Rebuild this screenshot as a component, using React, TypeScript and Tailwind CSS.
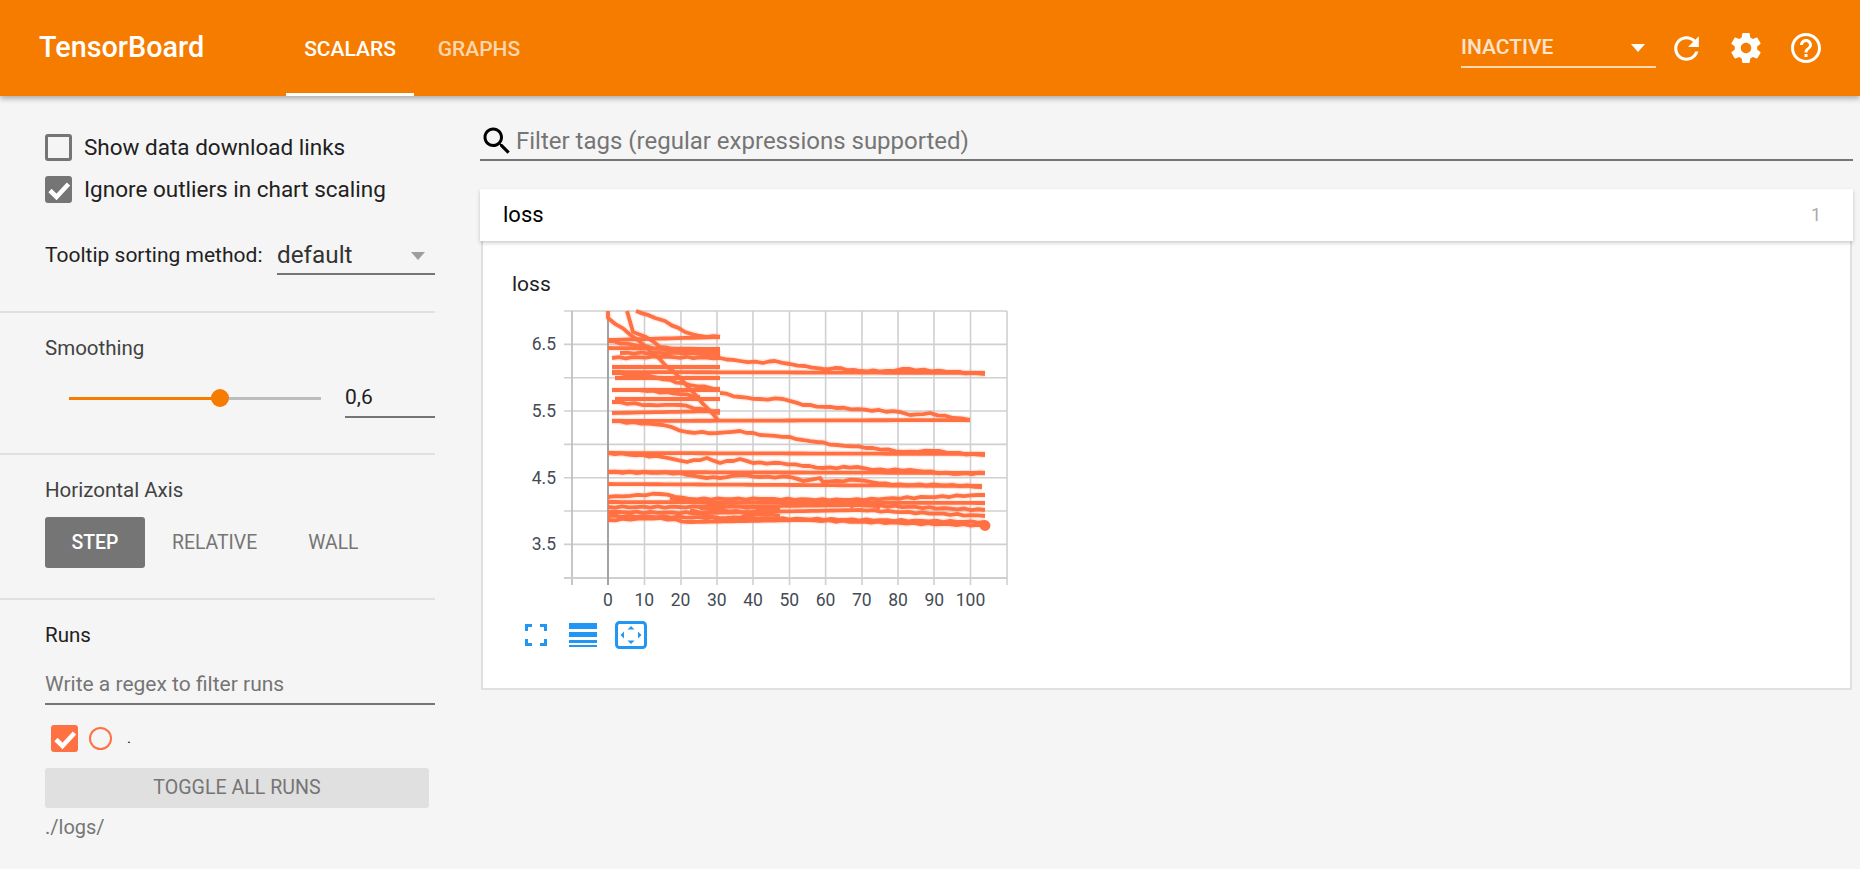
import React from "react";

const RUN = "#ff7043";

// coarse traces read off the chart, in page pixels
const traces: number[][][] = [
	[[608, 311], [608, 318], [638, 340], [680, 378], [718, 420]],
	[[627, 311], [633, 332], [646, 337], [660, 347], [690, 352], [720, 350]],
	[[636, 311], [655, 318], [665, 321], [685, 332], [700, 336], [720, 337]],
	[[608, 340], [720, 337]],
	[[608, 348], [720, 349]],
	[[608, 341], [640, 346], [680, 352], [720, 356]],
	[[620, 353], [720, 353]],
	[[612, 358], [660, 357], [720, 358], [740, 361], [763, 363], [775, 361], [790, 364], [805, 366], [823, 369], [835, 368], [860, 371], [893, 371], [902, 369], [953, 372], [985, 374]],
	[[612, 367], [720, 367]],
	[[612, 372], [985, 373]],
	[[612, 373], [650, 376], [690, 385], [720, 389]],
	[[615, 378], [720, 378]],
	[[612, 390], [720, 390]],
	[[640, 390], [680, 394], [700, 397]],
	[[615, 399], [720, 399]],
	[[720, 393], [740, 397], [760, 399], [783, 399], [803, 405], [837, 408], [900, 412], [910, 415], [930, 413], [953, 418], [970, 420]],
	[[612, 402], [650, 405], [680, 405], [720, 413]],
	[[612, 413], [720, 411]],
	[[612, 421], [970, 420]],
	[[612, 421], [663, 425], [687, 432], [717, 433], [740, 431], [760, 435], [790, 437], [803, 440], [817, 442], [837, 445], [873, 448], [903, 452], [933, 451], [953, 453], [985, 455]],
	[[608, 453], [985, 454]],
	[[608, 453], [663, 457], [687, 462], [707, 458], [720, 463], [740, 459], [753, 463], [780, 463], [803, 466], [823, 468], [857, 467], [873, 470], [910, 470], [953, 474], [985, 473]],
	[[608, 472], [985, 473]],
	[[608, 472], [680, 473], [700, 477], [720, 478], [740, 475], [760, 477], [790, 477], [803, 481], [820, 478], [823, 482], [857, 480], [893, 485], [953, 485], [982, 487]],
	[[608, 484], [982, 486]],
	[[608, 497], [660, 494], [690, 499], [760, 499], [850, 500], [985, 495]],
	[[608, 502], [985, 503]],
	[[608, 507], [700, 507], [860, 505], [985, 510]],
	[[608, 512], [700, 513], [860, 510], [985, 516]],
	[[608, 516], [985, 522]],
	[[608, 520], [660, 518], [690, 522], [800, 520], [985, 525.5]],
	[[670, 498], [720, 505], [780, 510]],
	[[690, 510], [720, 520], [760, 514]],
	[[850, 507], [862, 501], [880, 508]],
	[[700, 508], [780, 516]],
];

// adds a small repeatable wobble so long traces don't look ruled
function wobble(trace: number[][], seed: number): string {
	const out: string[] = [];
	for (let i = 0; i < trace.length - 1; i++) {
		const [x0, y0] = trace[i];
		const [x1, y1] = trace[i + 1];
		const steps = Math.max(1, Math.round((x1 - x0) / 7));
		for (let s = 0; s < steps; s++) {
			const t = s / steps;
			const n = s === 0 ? 0 : Math.sin((x0 + t * (x1 - x0)) * 0.37 + seed * 2.1) * 0.7;
			const flat = Math.abs(y1 - y0) < 4 && x1 - x0 > 100;
			out.push(`${x0 + t * (x1 - x0)},${y0 + t * (y1 - y0) + (flat ? 0 : n)}`);
		}
	}
	const last = trace[trace.length - 1];
	out.push(`${last[0]},${last[1]}`);
	return out.join(" ");
}

function ChartPlot() {
	const hLines = [311, 344.4, 377.8, 411, 444.4, 477.7, 511, 544.4, 577.7];
	const vLines = [644.5, 681, 717, 753, 789.5, 825.6, 862, 898, 934, 970.5];
	const xLabels = [0, 10, 20, 30, 40, 50, 60, 70, 80, 90, 100];
	return (
		<svg width="500" height="312" viewBox="520 300 500 312" className="block">
			{hLines.map((y) => (
				<line key={y} x1="564" x2="1007" y1={y} y2={y} stroke="#d0d0d0" strokeWidth="1.6" />
			))}
			{vLines.map((x) => (
				<line key={x} x1={x} x2={x} y1="311" y2="585" stroke="#d0d0d0" strokeWidth="1.6" />
			))}
			<line x1="572" x2="572" y1="311" y2="585" stroke="#c0c0c0" strokeWidth="1.8" />
			<line x1="1007" x2="1007" y1="311" y2="585" stroke="#d0d0d0" strokeWidth="1.6" />
			<line x1="564" x2="1007" y1="578" y2="578" stroke="#cfcfcf" strokeWidth="2" />
			<line x1="608" x2="608" y1="311" y2="585" stroke="#a3a3a3" strokeWidth="2" />
			{traces.map((t, i) => (
				<polyline key={"halo" + i} points={wobble(t, i + 3)} fill="none" stroke={RUN} strokeOpacity="0.14" strokeWidth="6.5" />
			))}
			{traces.map((t, i) => (
				<polyline key={"run" + i} points={wobble(t, i)} fill="none" stroke={RUN} strokeWidth="3.8" strokeLinejoin="round" />
			))}
			<circle cx="985" cy="525.5" r="5.4" fill={RUN} />
			{[["6.5", 344.4], ["5.5", 411], ["4.5", 477.7], ["3.5", 544.4]].map(([label, y]) => (
				<text key={label} x="556" y={Number(y) + 6} textAnchor="end" fontSize="17.5" fill="#444b55">
					{label}
				</text>
			))}
			{xLabels.map((v) => (
				<text key={v} x={608 + v * 3.625} y="606" textAnchor="middle" fontSize="17.5" fill="#444b55">
					{v}
				</text>
			))}
		</svg>
	);
}

function ChartTools() {
	return (
		<div className="flex items-center mt-[9px] ml-[5px]">
			<svg width="22" height="22" viewBox="0 0 22 22" fill="none" stroke="#2196f3" strokeWidth="3">
				<path d="M1.5 7V1.5H7M15 1.5h5.5V7M20.5 15v5.5H15M7 20.5H1.5V15" />
			</svg>
			<svg width="28" height="24" viewBox="0 0 28 24" className="ml-[22px]" fill="#2196f3">
				<rect x="0" y="0" width="28" height="6" />
				<rect x="0" y="9" width="28" height="5" />
				<rect x="0" y="17" width="28" height="3" />
				<rect x="0" y="22" width="28" height="2" />
			</svg>
			<svg width="32" height="28" viewBox="0 0 32 28" className="ml-[18px]">
				<rect x="1.5" y="1.5" width="29" height="25" rx="3" fill="none" stroke="#2196f3" strokeWidth="3" />
				<path d="M16 5l3.5 3.5h-7zM16 23l-3.5-3.5h7zM5.5 14L9 10.5v7zM26.5 14L23 10.5v7z" fill="#2196f3" />
			</svg>
		</div>
	);
}

function Check({ checked, color }: { checked: boolean; color: string }) {
	return (
		<div
			className="w-[27px] h-[27px] shrink-0 rounded-[3px] border-[3px] flex items-center justify-center"
			style={{ borderColor: color, backgroundColor: checked ? color : "transparent" }}
		>
			{checked && (
				<svg width="24" height="24" viewBox="0 0 24 24" fill="none" stroke="white" strokeWidth="4.6" className="shrink-0">
					<path d="M3 12.5l6.5 6.5L21.5 6" />
				</svg>
			)}
		</div>
	);
}

function Sidebar() {
	return (
		<aside className="w-[435px] shrink-0">
			<div className="h-[217px] pt-[38px] pl-[45px] border-b-2 border-[#e0e0e0]">
				<div className="flex items-center h-[27px] text-[22.5px] text-[#212121]">
					<Check checked={false} color="#757575" />
					<span className="ml-[12px]">Show data download links</span>
				</div>
				<div className="flex items-center h-[27px] mt-[15px] text-[22.5px] text-[#212121]">
					<Check checked={true} color="#757575" />
					<span className="ml-[12px]">Ignore outliers in chart scaling</span>
				</div>
				<div className="flex items-start mt-[37px]">
					<span className="text-[21px] text-[#212121] leading-[28px] pt-[1px] w-[232px] whitespace-nowrap">Tooltip sorting method:</span>
					<div className="w-[158px] h-[35px] pt-[1px] border-b-2 border-[#757575] flex justify-between pr-[10px] text-[24.3px] text-[#333] leading-[28px]">
						<span>default</span>
						<span className="w-0 h-0 mt-[11px] border-x-[7px] border-x-transparent border-t-[8px] border-t-[#9e9e9e]" />
					</div>
				</div>
			</div>

			<div className="h-[142px] pl-[45px] border-b-2 border-[#e0e0e0]">
				<div className="pt-[23px] text-[20.5px] leading-[24px] text-[#424242]">Smoothing</div>
				<div className="flex items-start mt-[25px]">
					<div className="relative w-[252px] h-[3px] ml-[24px] mt-[12px] bg-[#bdbdbd]">
						<div className="h-full w-[151px] bg-[#f57c00]" />
						<div className="absolute left-[142px] top-[-8px] w-[18px] h-[18px] rounded-full bg-[#f57c00]" />
					</div>
					<div className="ml-[24px] w-[90px] h-[33px] border-b-2 border-[#757575] text-[21px] leading-[24px] text-[#212121]">0,6</div>
				</div>
			</div>

			<div className="h-[145px] pl-[45px] border-b-2 border-[#e0e0e0]">
				<div className="pt-[23px] text-[20.5px] leading-[24px] text-[#424242]">Horizontal Axis</div>
				<div className="flex items-center mt-[15px] text-[19.4px] text-[#757575]">
					<div className="w-[100px] h-[51px] rounded-[3px] bg-[#757575] text-white flex items-center justify-center font-medium">STEP</div>
					<span className="ml-[27px]">RELATIVE</span>
					<span className="ml-[51px]">WALL</span>
				</div>
			</div>

			<div className="pl-[45px]">
				<div className="pt-[23px] text-[20.5px] leading-[24px] text-[#212121]">Runs</div>
				<div className="mt-[14px] h-[44px] pt-[11px] border-b-[2px] border-[#757575] text-[21px] leading-[24px] text-[#757575]">Write a regex to filter runs</div>
				<div className="flex items-center h-[27px] ml-[6px] mt-[20px]">
					<Check checked={true} color={RUN} />
					<div className="ml-[11px] w-[23px] h-[23px] rounded-full border-2 border-[#ff7043]" />
					<span className="ml-[15px] text-[15px] text-black">.</span>
				</div>
				<div className="mt-[16px] w-[384px] h-[40px] rounded-[3px] bg-[#e0e0e0] flex items-center justify-center text-[19.6px] text-[#757575]">TOGGLE ALL RUNS</div>
				<div className="mt-[7px] text-[20px] leading-[24px] text-[#757575]">./logs/</div>
			</div>
		</aside>
	);
}

export default function App() {
	return (
		<div className="w-[1860px] h-[869px] overflow-hidden bg-[#f5f5f5] font-[Roboto,sans-serif]">
			<header className="relative z-10 flex items-center h-[96px] bg-[#f67c00] shadow-[0_3px_5px_rgba(0,0,0,0.28)] text-white">
				<div className="ml-[39px] w-[247px] text-[28.8px] font-medium">TensorBoard</div>
				<div className="flex h-full">
					<div className="w-[128px] h-full flex items-center justify-center border-b-[3px] border-white text-[21px] font-medium pt-[6px]">SCALARS</div>
					<div className="ml-[5px] w-[120px] h-full flex items-center justify-center text-[21px] font-medium text-white/70 pt-[3px]">GRAPHS</div>
				</div>
				<div className="ml-auto flex items-center">
					<div className="w-[195px] h-[38px] mt-[2px] pt-[5px] border-b-2 border-white/70 flex justify-between pr-[11px] text-[21px] font-medium leading-[24px] text-white/80">
						<span>INACTIVE</span>
						<span className="w-0 h-0 mt-[9px] border-x-[7.5px] border-x-transparent border-t-[8px] border-t-white" />
					</div>
					<div className="w-[60px] ml-0 flex justify-center">
						<svg width="37" height="37" viewBox="0 0 24 24" fill="white">
							<path d="M17.65 6.35C16.2 4.9 14.21 4 12 4c-4.42 0-7.99 3.58-7.99 8s3.57 8 7.99 8c3.73 0 6.84-2.55 7.73-6h-2.08c-.82 2.33-3.04 4-5.65 4-3.31 0-6-2.69-6-6s2.69-6 6-6c1.66 0 3.14.69 4.22 1.78L13 11h7V4l-2.35 2.35z" />
						</svg>
					</div>
					<div className="w-[60px] flex justify-center">
						<svg width="36" height="36" viewBox="0 0 24 24" fill="white">
							<path d="M19.43 12.98c.04-.32.07-.64.07-.98s-.03-.66-.07-.98l2.11-1.65c.19-.15.24-.42.12-.64l-2-3.46c-.12-.22-.39-.3-.61-.22l-2.49 1c-.52-.4-1.08-.73-1.69-.98l-.38-2.65C14.46 2.18 14.25 2 14 2h-4c-.25 0-.46.18-.49.42l-.38 2.65c-.61.25-1.17.59-1.69.98l-2.49-1c-.23-.09-.49 0-.61.22l-2 3.46c-.13.22-.07.49.12.64l2.11 1.65c-.04.32-.07.65-.07.98s.03.66.07.98l-2.11 1.65c-.19.15-.24.42-.12.64l2 3.46c.12.22.39.3.61.22l2.49-1c.52.4 1.08.73 1.69.98l.38 2.65c.03.24.24.42.49.42h4c.25 0 .46-.18.49-.42l.38-2.65c.61-.25 1.17-.59 1.69-.98l2.49 1c.23.09.49 0 .61-.22l2-3.46c.12-.22.07-.49-.12-.64l-2.11-1.65zM12 15.5c-1.93 0-3.5-1.57-3.5-3.5s1.57-3.5 3.5-3.5 3.5 1.57 3.5 3.5-1.57 3.5-3.5 3.5z" />
						</svg>
					</div>
					<div className="w-[60px] mr-[24px] flex justify-center">
						<svg width="36" height="36" viewBox="0 0 24 24" fill="white">
							<path d="M11 18h2v-2h-2v2zm1-16C6.48 2 2 6.48 2 12s4.48 10 10 10 10-4.48 10-10S17.52 2 12 2zm0 18c-4.41 0-8-3.59-8-8s3.59-8 8-8 8 3.59 8 8-3.59 8-8 8zm0-14c-2.21 0-4 1.79-4 4h2c0-1.1.9-2 2-2s2 .9 2 2c0 2-3 1.75-3 5h2c0-2.25 3-2.5 3-5 0-2.21-1.79-4-4-4z" />
						</svg>
					</div>
				</div>
			</header>

			<div className="flex">
				<Sidebar />
				<main className="ml-[45px] w-[1373px]">
					<div className="mt-[27px] h-[38px] flex items-center border-b-2 border-[#757575]">
						<svg width="36" height="36" viewBox="0 0 24 24" fill="black" className="ml-[-1px] shrink-0">
							<path d="M15.5 14h-.79l-.28-.27C15.41 12.59 16 11.11 16 9.5 16 5.91 13.09 3 9.5 3S3 5.91 3 9.5 5.91 16 9.5 16c1.61 0 3.09-.59 4.23-1.57l.27.28v.79l5 4.99L20.49 19l-4.99-5zm-6 0C7.01 14 5 11.99 5 9.5S7.01 5 9.5 5 14 7.01 14 9.5 11.99 14 9.5 14z" />
						</svg>
						<span className="ml-[1px] text-[24px] text-[#757575]">Filter tags (regular expressions supported)</span>
					</div>
					<div className="mt-[28px] h-[52px] bg-white flex items-center justify-between pl-[23px] pr-[32px] pb-[2px] shadow-[0_2px_4px_rgba(0,0,0,0.2)] relative">
						<span className="text-[22px] text-black">loss</span>
						<span className="text-[18px] text-[#aaa]">1</span>
					</div>
					<div className="mx-[1px] h-[449px] bg-white border-x-2 border-b-2 border-[#e0e0e0] pl-[29px] pt-[31px]">
						<div className="text-[21px] leading-[24px] text-[#212121]">loss</div>
						<div className="ml-[8px] mt-[4px]">
							<ChartPlot />
							<ChartTools />
						</div>
					</div>
				</main>
			</div>
		</div>
	);
}
